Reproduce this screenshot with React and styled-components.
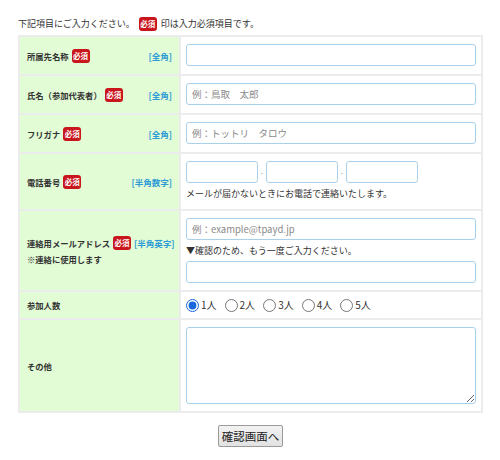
import React from "react";
import styled, { createGlobalStyle } from "styled-components";

const GlobalStyle = createGlobalStyle`
  body {
    margin: 0;
    background: #fff;
    font-family: "Noto Sans CJK JP", "Noto Sans", sans-serif;
    color: #333;
  }
`;

const Page = styled.div`
  width: 500px;
  padding: 16px 17px 0 18px;
  box-sizing: border-box;
`;

const Lead = styled.p`
  margin: 0 0 3px;
  font-size: 9px;
  line-height: 16px;
  display: flex;
  align-items: center;
  gap: 4px;
`;

const Badge = styled.span`
  display: inline-flex;
  align-items: center;
  justify-content: center;
  width: 18px;
  height: 14px;
  border-radius: 3px;
  background: #c9161d;
  color: #fff;
  font-size: 7.5px;
  font-weight: bold;
  line-height: 1;
  flex-shrink: 0;
`;

const Table = styled.table`
  width: 465px;
  border-collapse: collapse;
  table-layout: fixed;
  border: 2px solid #ececec;
`;

const LabelCell = styled.th`
  width: 145px;
  padding: 0 7px;
  background: #e2fcd5;
  border: 2px solid #ececec;
  text-align: left;
  vertical-align: middle;
  font-weight: bold;
  font-size: 8.3px;
  color: #333;
`;

const FieldCell = styled.td`
  padding: ${(p) => p.$pad || "7px 5px 8px"};
  border: 2px solid #ececec;
  background: #fff;
  vertical-align: middle;
`;

const LabelRow = styled.div`
  display: flex;
  justify-content: space-between;
  align-items: flex-start;
  gap: 3px;
  white-space: nowrap;
`;

const LabelMain = styled.div`
  display: flex;
  flex-direction: column;
  gap: 2px;
`;

const LabelTitle = styled.div`
  display: flex;
  align-items: center;
  gap: 3px;
  line-height: 14px;
`;

const Tag = styled.span`
  color: #2c9ad5;
  font-weight: bold;
  font-size: 8.5px;
  line-height: 14px;
  white-space: nowrap;
`;

const TextInput = styled.input`
  display: block;
  width: ${(p) => p.$w || "100%"};
  height: 22px;
  box-sizing: border-box;
  border: 1px solid #a9d0ea;
  border-radius: 3px;
  padding: 0 5px;
  font-family: inherit;
  font-size: 9.5px;
  color: #333;
  background: #fff;
  outline: none;

  &::placeholder {
    color: #8a8a8a;
  }
`;

const PhoneRow = styled.div`
  display: flex;
  align-items: center;
  gap: 2px;
`;

const Dash = styled.span`
  color: #999;
  font-size: 7px;
  width: 4px;
  text-align: center;
`;

const Note = styled.div`
  font-size: 9px;
  line-height: 15px;
  margin: ${(p) => p.$m || "3px 0 0"};
  color: #333;
`;

const Radios = styled.div`
  display: flex;
  align-items: center;
  gap: 8px;
  height: 14px;
`;

const RadioLabel = styled.label`
  display: flex;
  align-items: center;
  gap: 2px;
  font-size: 10px;
  line-height: 14px;
  color: #333;
`;

const Radio = styled.input`
  margin: 0;
  width: 13px;
  height: 13px;
  accent-color: #1767dd;
`;

const TextArea = styled.textarea`
  display: block;
  width: 100%;
  height: 77px;
  box-sizing: border-box;
  border: 1px solid #a9d0ea;
  border-radius: 3px;
  resize: vertical;
  font-family: inherit;
  outline: none;
`;

const Actions = styled.div`
  display: flex;
  justify-content: center;
  margin-top: 12px;
`;

const SubmitButton = styled.button`
  height: 22px;
  padding: 0 3px;
  font-family: "Noto Sans CJK JP", sans-serif;
  font-size: 11.5px;
  color: #222;
  background: linear-gradient(#f2f2f2, #e2e2e2);
  border: 1px solid #9a9a9a;
  border-radius: 2px;
  line-height: 20px;
`;

const Label = ({ title, required, tag, sub }) => (
  <LabelRow>
    <LabelMain>
      <LabelTitle>
        {title}
        {required && <Badge>必須</Badge>}
      </LabelTitle>
      {sub && <LabelTitle>{sub}</LabelTitle>}
    </LabelMain>
    {tag && <Tag>{tag}</Tag>}
  </LabelRow>
);

const people = ["1人", "2人", "3人", "4人", "5人"];

export default function App() {
  return (
    <Page>
      <GlobalStyle />
      <Lead>
        下記項目にご入力ください。<Badge>必須</Badge>印は入力必須項目です。
      </Lead>
      <Table>
        <tbody>
          <tr>
            <LabelCell>
              <Label title="所属先名称" required tag="[全角]" />
            </LabelCell>
            <FieldCell $pad="7px 5px 8px">
              <TextInput />
            </FieldCell>
          </tr>
          <tr>
            <LabelCell>
              <Label title="氏名（参加代表者）" required tag="[全角]" />
            </LabelCell>
            <FieldCell>
              <TextInput placeholder="例：鳥取　太郎" />
            </FieldCell>
          </tr>
          <tr>
            <LabelCell>
              <Label title="フリガナ" required tag="[全角]" />
            </LabelCell>
            <FieldCell>
              <TextInput placeholder="例：トットリ　タロウ" />
            </FieldCell>
          </tr>
          <tr>
            <LabelCell>
              <Label title="電話番号" required tag="[半角数字]" />
            </LabelCell>
            <FieldCell>
              <PhoneRow>
                <TextInput $w="72px" />
                <Dash>-</Dash>
                <TextInput $w="72px" />
                <Dash>-</Dash>
                <TextInput $w="72px" />
              </PhoneRow>
              <Note>メールが届かないときにお電話で連絡いたします。</Note>
            </FieldCell>
          </tr>
          <tr>
            <LabelCell>
              <Label
                title="連絡用メールアドレス"
                required
                tag="[半角英字]"
                sub="※連絡に使用します"
              />
            </LabelCell>
            <FieldCell $pad="7px 5px 7px">
              <TextInput placeholder="例：example@tpayd.jp" />
              <Note $m="3px 0 3px">▼確認のため、もう一度ご入力ください。</Note>
              <TextInput />
            </FieldCell>
          </tr>
          <tr>
            <LabelCell>
              <Label title="参加人数" />
            </LabelCell>
            <FieldCell $pad="6px 5px 6px">
              <Radios>
                {people.map((p, i) => (
                  <RadioLabel key={p}>
                    <Radio type="radio" name="people" defaultChecked={i === 0} />
                    {p}
                  </RadioLabel>
                ))}
              </Radios>
            </FieldCell>
          </tr>
          <tr>
            <LabelCell>
              <Label title="その他" />
            </LabelCell>
            <FieldCell $pad="7px 5px 7px">
              <TextArea />
            </FieldCell>
          </tr>
        </tbody>
      </Table>
      <Actions>
        <SubmitButton>確認画面へ</SubmitButton>
      </Actions>
    </Page>
  );
}
